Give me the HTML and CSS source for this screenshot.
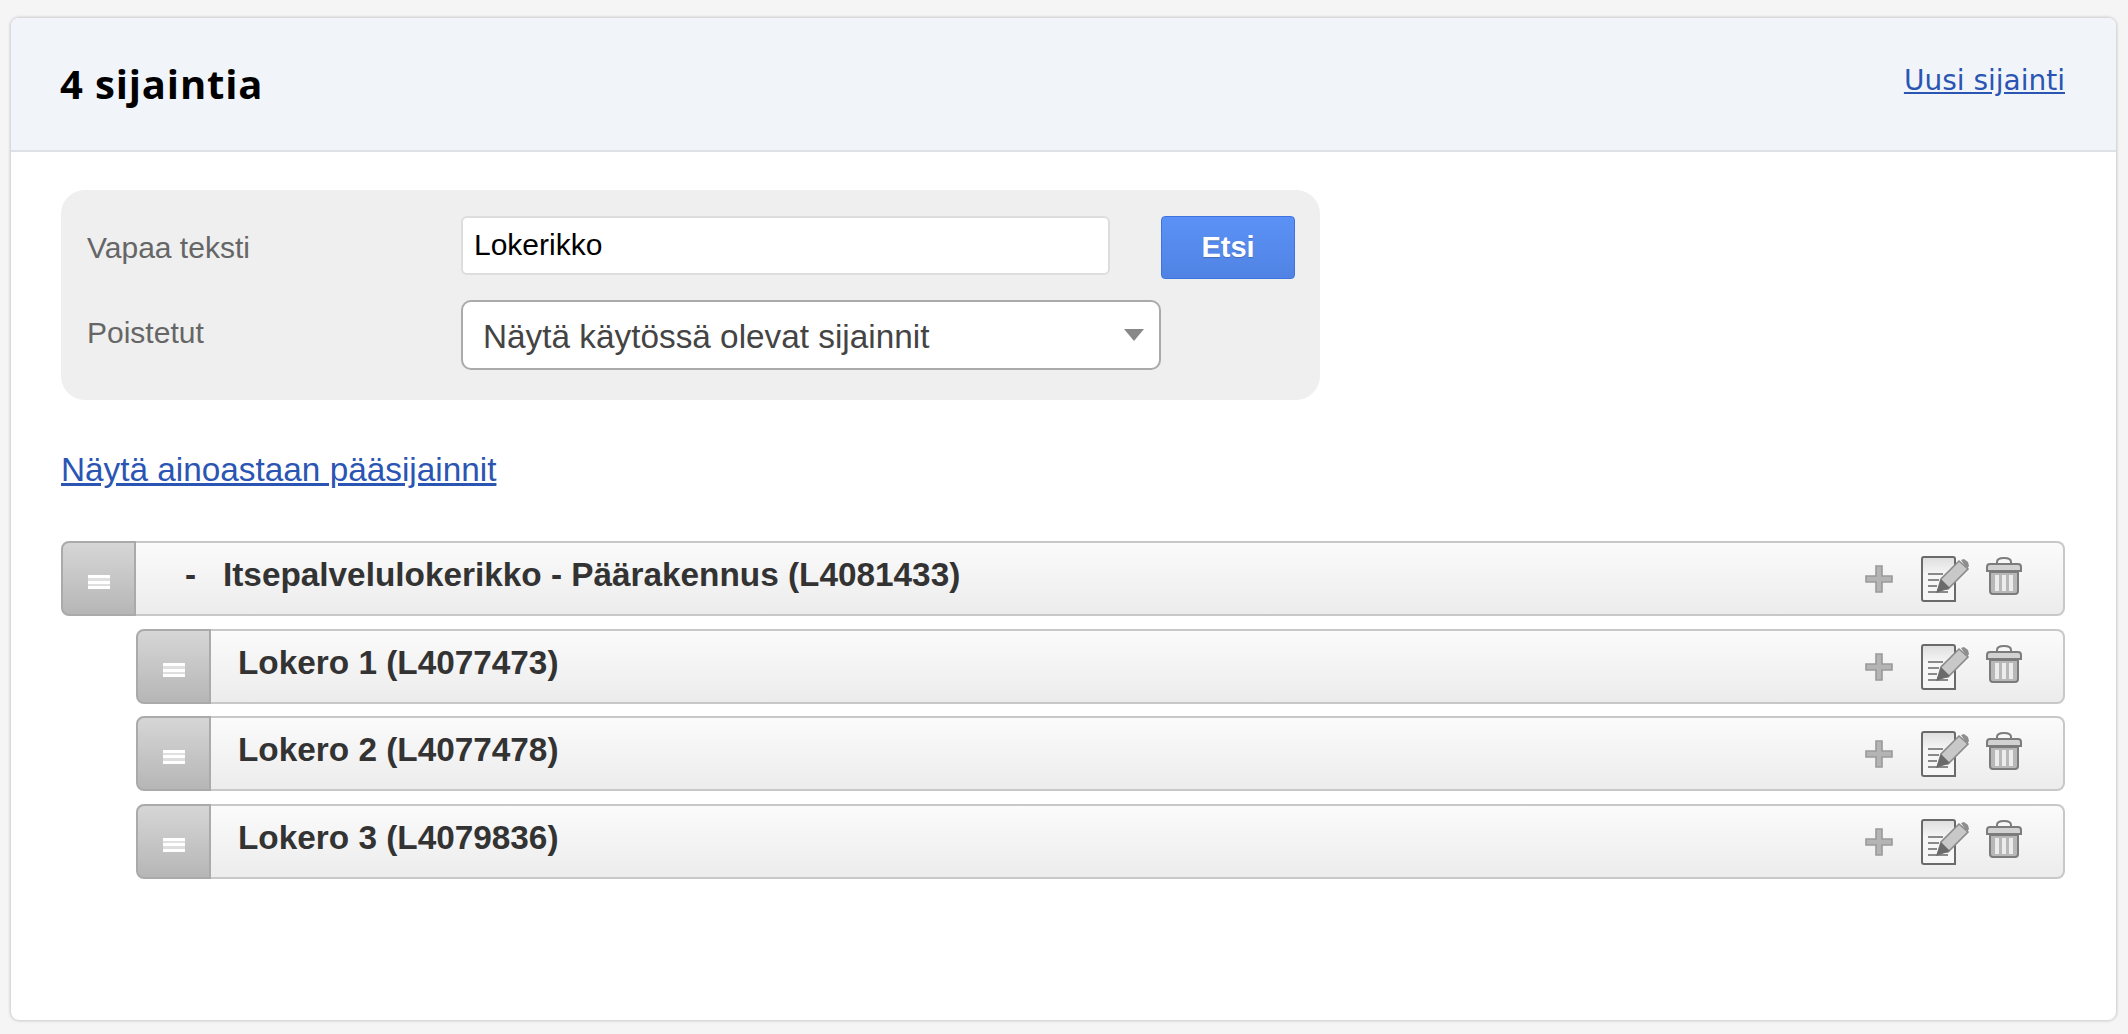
FILE: index.html
```html
<!DOCTYPE html>
<html lang="fi">
<head>
<meta charset="utf-8">
<title>Sijainnit</title>
<link rel="stylesheet" href="styles.css">
</head>
<body>
<svg class="defs" width="0" height="0" aria-hidden="true">
  <defs>
    <linearGradient id="doc-fill" x1="0" y1="0" x2="0" y2="1">
      <stop offset="0" stop-color="#dedede"/>
      <stop offset=".4" stop-color="#f6f6f6"/>
      <stop offset="1" stop-color="#f6f6f6"/>
    </linearGradient>
    <g id="i-plus">
      <path d="M11 1h6v10h10v6H17v10h-6V17H1v-6h10z" fill="#b4b4b4" stroke="#9a9a9a" stroke-width="1.6"/>
    </g>
    <g id="i-edit">
      <path d="M3 1h29a2 2 0 0 1 2 2v42H3a2 2 0 0 1-2-2V3a2 2 0 0 1 2-2z" fill="url(#doc-fill)" stroke="#6a6a6a" stroke-width="2"/>
      <path d="M7 18h15M7 24h11M7 30h9M7 36h20" stroke="#8a8a8a" stroke-width="2" fill="none"/>
      <path d="M17 34l3-11 18-18 9 8-20 20z" fill="#c8c8c8" stroke="#8a8a8a" stroke-width="1.600"/>
      <path d="M15 37l5-14 9 9z" fill="#6a6a6a"/>
      <path d="M40 4l3-1 4 3 1 4-2 3z" fill="#8e8e8e"/>
    </g>
    <g id="i-trash">
      <path d="M11 7V5c0-2.500 3-4 7-4s7 1.500 7 4v2" fill="none" stroke="#7c7c7c" stroke-width="2"/>
      <path d="M4 7h28a3 3 0 0 1 3 3v4H1v-4a3 3 0 0 1 3-3z" fill="#d2d2d2" stroke="#7c7c7c" stroke-width="2"/>
      <path d="M4 15h28v19a3 3 0 0 1-3 3H7a3 3 0 0 1-3-3z" fill="#b8b8b8" stroke="#7c7c7c" stroke-width="2"/>
      <path d="M11 18v16M18 18v16M25 18v16" stroke="#ececec" stroke-width="4"/>
    </g>
  </defs>
</svg>
<main class="card">
  <header class="card-head">
    <h1 class="title">4 sijaintia</h1>
    <a class="new-link" href="#">Uusi sijainti</a>
  </header>
  <div class="card-body">
    <form class="filter">
      <div class="filter-row filter-row-top">
        <label class="filter-label">Vapaa teksti</label>
        <input class="text-input" type="text" value="Lokerikko">
        <button class="search-btn" type="button">Etsi</button>
      </div>
      <div class="filter-row filter-row-bottom">
        <label class="filter-label">Poistetut</label>
        <div class="select-box">
          <span class="select-value">Näytä käytössä olevat sijainnit</span>
          <span class="caret"></span>
        </div>
      </div>
    </form>
    <a class="main-link" href="#">Näytä ainoastaan pääsijainnit</a>
    <ul class="tree">
      <li class="node">
        <div class="handle"><span class="bars"></span></div>
        <div class="node-main">
          <span class="toggle">-</span>
          <span class="node-name node-name-root">Itsepalvelulokerikko - Päärakennus (L4081433)</span>
          <div class="actions">
            <svg class="ic-plus" viewBox="0 0 28 28"><use href="#i-plus"/></svg>
            <svg class="ic-edit" viewBox="0 0 49 46"><use href="#i-edit"/></svg>
            <svg class="ic-trash" viewBox="0 0 36 39"><use href="#i-trash"/></svg>
          </div>
        </div>
      </li>
      <li class="node node-child">
        <div class="handle"><span class="bars"></span></div>
        <div class="node-main">
          <span class="node-name">Lokero 1 (L4077473)</span>
          <div class="actions">
            <svg class="ic-plus" viewBox="0 0 28 28"><use href="#i-plus"/></svg>
            <svg class="ic-edit" viewBox="0 0 49 46"><use href="#i-edit"/></svg>
            <svg class="ic-trash" viewBox="0 0 36 39"><use href="#i-trash"/></svg>
          </div>
        </div>
      </li>
      <li class="node node-child">
        <div class="handle"><span class="bars"></span></div>
        <div class="node-main">
          <span class="node-name">Lokero 2 (L4077478)</span>
          <div class="actions">
            <svg class="ic-plus" viewBox="0 0 28 28"><use href="#i-plus"/></svg>
            <svg class="ic-edit" viewBox="0 0 49 46"><use href="#i-edit"/></svg>
            <svg class="ic-trash" viewBox="0 0 36 39"><use href="#i-trash"/></svg>
          </div>
        </div>
      </li>
      <li class="node node-child">
        <div class="handle"><span class="bars"></span></div>
        <div class="node-main">
          <span class="node-name">Lokero 3 (L4079836)</span>
          <div class="actions">
            <svg class="ic-plus" viewBox="0 0 28 28"><use href="#i-plus"/></svg>
            <svg class="ic-edit" viewBox="0 0 49 46"><use href="#i-edit"/></svg>
            <svg class="ic-trash" viewBox="0 0 36 39"><use href="#i-trash"/></svg>
          </div>
        </div>
      </li>
    </ul>
  </div>
</main>
</body>
</html>
```
FILE: styles.css
```css
* { box-sizing: border-box; }
html, body { margin: 0; height: 100%; }
body {
  background: #f5f5f5;
  padding: 18px 12px 14px 11px;
  font-family: "Liberation Sans", Arial, sans-serif;
  overflow: hidden;
}
.defs { position: absolute; }
.card {
  height: 1002px;
  background: #fff;
  border-radius: 8px;
  box-shadow: 0 0 3px 1px rgba(0,0,0,.18);
  overflow: hidden;
}
.card-head {
  height: 134px;
  background: #f1f5fa;
  border-bottom: 2px solid #dde1e8;
  padding: 0 51px 0 49px;
  display: flex;
  justify-content: space-between;
}
.title {
  margin: 40px 0 0;
  font-family: "Open Sans", sans-serif;
  font-size: 40px;
  letter-spacing: .85px;
  line-height: 52px;
  font-weight: 700;
  color: #000;
}
.new-link {
  margin-top: 46px;
  font-family: "DejaVu Sans", sans-serif;
  font-size: 28px;
  line-height: 34px;
  color: #2b55b3;
}
.card-body { padding: 38px 51px 0 50px; }
.filter {
  width: 1259px;
  height: 210px;
  background: #efefef;
  border-radius: 24px;
  padding: 26px 26px 0;
}
.filter-row { display: flex; }
.filter-row > * { flex: none; }
.filter-row-top { height: 63px; }
.filter-row-bottom { margin-top: 21px; }
.filter-label {
  width: 374px;
  font-size: 30px;
  line-height: 34px;
  color: #666;
  padding-top: 15px;
}
.filter-row-bottom .filter-label { padding-top: 16px; }
.text-input {
  width: 649px;
  height: 59px;
  border: 2px solid #ddd;
  border-radius: 6px;
  background: #fff;
  padding: 0 11px 2px;
  font: 30px "Liberation Sans", Arial, sans-serif;
  color: #000;
  outline: none;
}
.search-btn {
  width: 134px;
  height: 63px;
  margin-left: 51px;
  border: 1px solid #3f74e0;
  border-radius: 4px;
  background: linear-gradient(#5b91f6, #5083e3);
  color: #fff;
  font: 700 29px "Liberation Sans", Arial, sans-serif;
  text-shadow: 0 1px 1px rgba(0,0,0,.2);
  padding: 0;
}
.select-box {
  width: 700px;
  height: 70px;
  background: #fff;
  border: 2px solid #aaa;
  border-radius: 10px;
  padding: 0 20px;
  display: flex;
  align-items: center;
  justify-content: space-between;
  font-size: 33.33px;
  color: #444;
}
.select-value { padding-top: 3px; }
.caret {
  width: 0;
  height: 0;
  border-left: 10px solid transparent;
  border-right: 10px solid transparent;
  border-top: 12px solid #888;
  margin-right: -5px;
}
.main-link {
  display: block;
  margin-top: 51px;
  font-size: 33.33px;
  line-height: 37px;
  color: #2b55b3;
  width: max-content;
}
.tree {
  list-style: none;
  margin: 53px 0 0;
  padding: 0;
  display: flex;
  flex-direction: column;
  gap: 12.7px;
}
.node { display: flex; height: 75px; }
.node-child { margin-left: 75px; }
.handle {
  width: 75px;
  flex: none;
  border: 2px solid #aaa;
  border-radius: 8px 0 0 8px;
  background: linear-gradient(#d6d6d6, #b6b6b6);
  display: flex;
  align-items: center;
  justify-content: center;
}
.bars {
  width: 22px;
  height: 14px;
  margin-top: 7px;
  background: repeating-linear-gradient(#fff 0 3px, rgba(255,255,255,.45) 3px 5.5px);
}
.node-main {
  flex: 1;
  display: flex;
  align-items: flex-start;
  background: linear-gradient(#fbfbfb, #ececec);
  border: 2px solid #c8c8c8;
  border-left: 0;
  border-radius: 0 8px 8px 0;
  color: #333;
  font-weight: 700;
  font-size: 33.33px;
  line-height: 37px;
  padding-top: 13px;
}
.toggle { width: 38px; margin-left: 49px; }
.node-name { margin-left: 27px; }
.node-name-root { margin-left: 0; }
.actions {
  margin-left: auto;
  margin-right: 41px;
  display: flex;
  align-items: flex-start;
  flex: none;
  filter: blur(.4px);
}
.ic-plus { width: 28px; height: 28px; margin-top: 9px; }
.ic-edit { width: 49px; height: 46px; margin-left: 28px; }
.ic-trash { width: 36px; height: 39px; margin-left: 16px; margin-top: 1px; }
```
